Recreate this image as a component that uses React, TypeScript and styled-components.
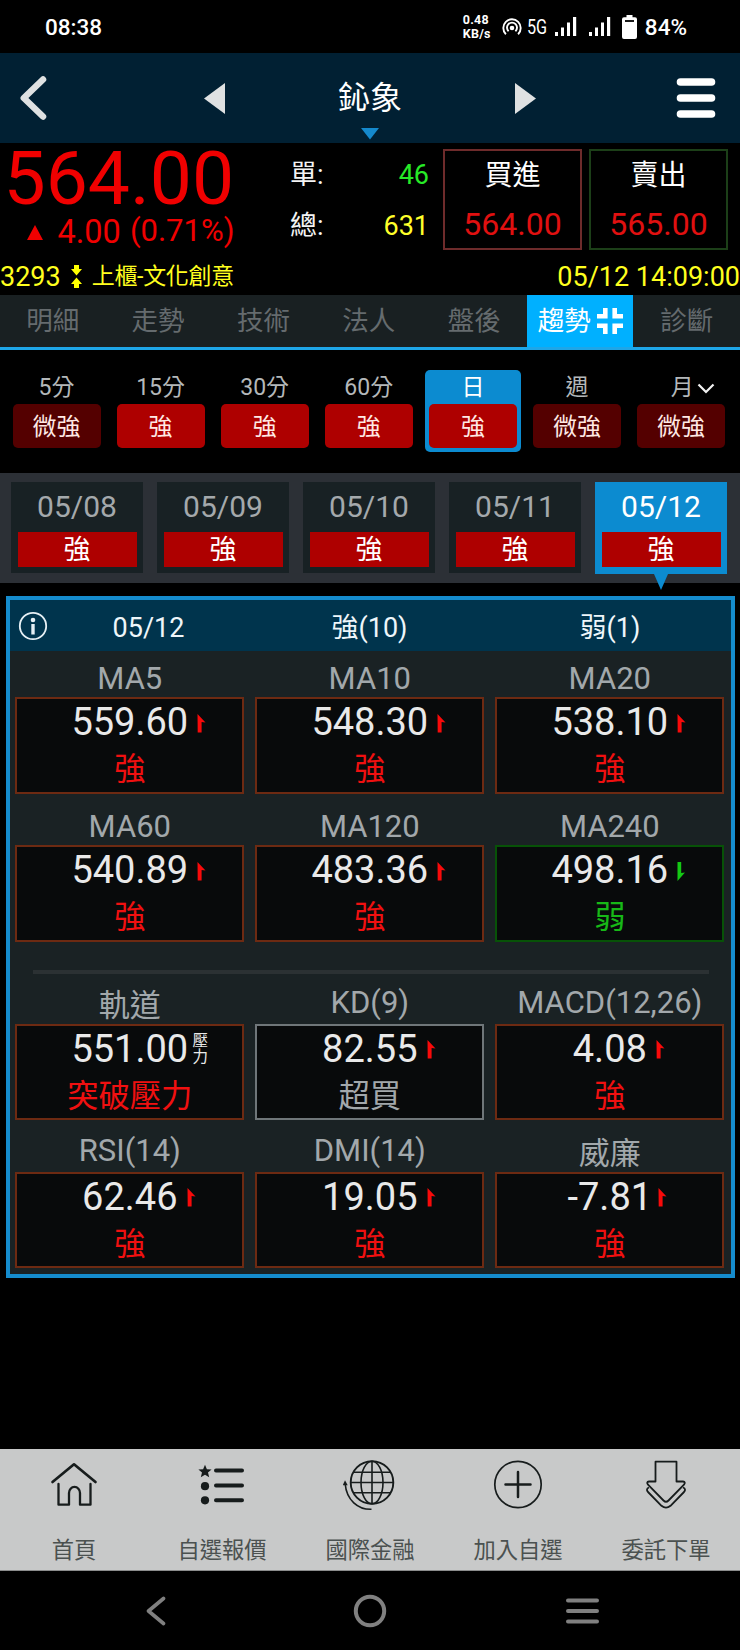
import React from "react";
import styled, { createGlobalStyle } from "styled-components";

const GlobalStyle = createGlobalStyle`
  * { box-sizing: border-box; }
  body {
    margin: 0;
    background: #000;
    font-family: Roboto, "Noto Sans CJK TC", sans-serif;
  }
  svg { display: block; flex: none; }
`;

const Screen = styled.main`
  width: 740px;
  height: 1650px;
  display: flex;
  flex-direction: column;
  background: #000;
  color: #fff;
  white-space: nowrap;
  overflow: hidden;
`;

/* ---------- status bar ---------- */

const StatusBar = styled.header`
  height: 53px;
  padding: 0 53px 0 45px;
  display: flex;
  align-items: center;
  font-size: 22.5px;
  font-weight: 500;
  line-height: 54px;
`;

const Clock = styled.span`
  margin-right: auto;
`;

const NetSpeed = styled.span`
  width: 28px;
  margin-right: 11px;
  font-size: 12.5px;
  font-weight: 700;
  line-height: 13.5px;
  letter-spacing: 0.2px;
`;

const NetworkType = styled.span`
  width: 20px;
  margin: 0 8px 0 5.5px;
  font-size: 20px;
  font-weight: 400;
  transform: scaleX(0.81);
  transform-origin: left;
`;

/* ---------- title bar ---------- */

const TitleBar = styled.nav`
  height: 90px;
  padding: 0 24px 0 19px;
  display: grid;
  grid-template-columns: 185px 21px 1fr 21px 180px;
  align-items: center;
  background: #012033;
`;

const TitleBlock = styled.div`
  height: 90px;
  padding-top: 23px;
  display: flex;
  flex-direction: column;
  align-items: center;
  font-size: 32px;
  line-height: 44px;
  svg { margin-top: 8px; }
`;

const MenuButton = styled.div`
  justify-self: end;
`;

/* ---------- quote ---------- */

const Quote = styled.section`
  height: 115px;
  display: flex;
`;

const PriceBlock = styled.div`
  width: 290px;
  padding-left: 3.5px;
  color: #f00000;
`;

const Price = styled.div`
  margin-bottom: 3px;
  font-size: 75px;
  line-height: 71px;
`;

const Change = styled.div`
  display: flex;
  align-items: center;
  padding-left: 23px;
  height: 31px;
  font-size: 32.5px;
  line-height: 31px;
  svg { margin-right: 15px; }
`;

const Percent = styled.span`
  font-size: 31px;
  margin: -5px 0 0 9px;
`;

const Volumes = styled.dl`
  width: 139px;
  margin: 7px 14px 0 0;
  font-size: 27px;
`;

const VolumeRow = styled.div<{ $color: string }>`
  display: flex;
  justify-content: space-between;
  line-height: 50.7px;
  dt { color: #f4f4f4; }
  dd { margin: 0; color: ${(p) => p.$color}; }
`;

const OrderBox = styled.div<{ $border: string }>`
  width: 139px;
  height: 101px;
  margin: 6px 7px 0 0;
  border: 2px solid ${(p) => p.$border};
  font-size: 28px;
  line-height: 49px;
  text-align: center;
`;

const OrderPrice = styled.div`
  color: #e01010;
  font-size: 32px;
`;

const Ticker = styled.div`
  height: 37px;
  display: flex;
  align-items: center;
  color: #ffff1e;
  font-size: 27px;
  line-height: 36px;
  svg { margin: 0 10px; }
`;

const Sector = styled.span`
  font-size: 23px;
  letter-spacing: -0.3px;
`;

const Timestamp = styled.span`
  margin-left: auto;
`;

/* ---------- tabs ---------- */

const Tabs = styled.nav`
  height: 55px;
  display: grid;
  grid-template-columns: repeat(5, 105.4px) 106.5px 1fr;
  background: #192022;
  border-bottom: 3px solid #1ea6e8;
`;

const Tab = styled.div<{ $active?: boolean }>`
  display: flex;
  justify-content: center;
  align-items: center;
  gap: 6px;
  font-size: 26.5px;
  line-height: 50px;
  color: ${(p) => (p.$active ? "#fff" : "#656b6e")};
  background: ${(p) => (p.$active ? "#00b0ff" : "transparent")};
`;

/* ---------- periods ---------- */

const Periods = styled.section`
  height: 123px;
  padding: 20px 8px 0 8.5px;
  display: flex;
  gap: 8.1px;
`;

const Period = styled.div<{ $active?: boolean }>`
  width: 96px;
  height: 82px;
  padding: 0 4px;
  border-radius: 5px;
  background: ${(p) => (p.$active ? "#0c8bd0" : "transparent")};
  color: ${(p) => (p.$active ? "#fff" : "#b4b8ba")};
`;

const PeriodName = styled.div<{ $shift?: boolean }>`
  height: 34px;
  padding: 2px 0 0 ${(p) => (p.$shift ? 24 : 0)}px;
  display: flex;
  align-items: center;
  justify-content: center;
  gap: 3.5px;
  font-size: 23px;
  line-height: 36px;
`;

const StrengthChip = styled.div<{ $weak?: boolean }>`
  height: 44px;
  border-radius: 5px;
  background: ${(p) => (p.$weak ? "#540000" : "#ae0000")};
  color: #ffe9e4;
  font-size: 24px;
  line-height: 47px;
  text-align: center;
`;

/* ---------- dates ---------- */

const Dates = styled.section`
  height: 110px;
  padding: 9px 0 0 11px;
  display: flex;
  gap: 14px;
  background: #2c3036;
`;

const DateCard = styled.div<{ $active?: boolean }>`
  position: relative;
  width: 132px;
  height: ${(p) => (p.$active ? 92 : 91)}px;
  padding: 0 6.5px;
  background: ${(p) => (p.$active ? "#0c8bd0" : "#182124")};
  color: ${(p) => (p.$active ? "#fff" : "#a4a9ac")};
  font-size: 30px;
  line-height: 49.5px;
  text-align: center;
`;

const DateStrength = styled.div`
  height: 35.5px;
  background: #ae0000;
  color: #fff;
  font-size: 27px;
  line-height: 36px;
`;

const Pointer = styled.svg`
  position: absolute;
  top: 92px;
  left: 59px;
`;

/* ---------- indicator panel ---------- */

const Panel = styled.section`
  width: 729px;
  height: 682px;
  margin: 13px 0 171px 5.5px;
  border: 4px solid #158ccd;
  background: #1a2224;
`;

const PanelHead = styled.div`
  height: 51px;
  padding-top: 5px;
  display: grid;
  grid-template-columns: 240px 240px 1fr;
  background: #00344d;
  color: #eef6fa;
  font-size: 27px;
  line-height: 46px;
  text-align: center;
`;

const PanelDate = styled.div`
  display: flex;
  svg { margin: 6px 0 0 8px; }
  span { flex: 1; }
`;

const Grid = styled.div<{ $labelHeight: number; $gap: number }>`
  display: grid;
  grid-template-columns: repeat(3, 229px);
  grid-auto-rows: ${(p) => p.$labelHeight + 96.5}px;
  column-gap: 11px;
  row-gap: ${(p) => p.$gap}px;
  padding-left: 5.8px;
`;

const Cell = styled.div`
  display: flex;
  flex-direction: column;
  justify-content: space-between;
`;

const Label = styled.div<{ $drop?: boolean }>`
  height: 36px;
  padding-top: ${(p) => (p.$drop ? 3 : 0)}px;
  color: #a2a8ab;
  font-size: 31px;
  line-height: 36px;
  text-align: center;
`;

const MovingAverages = styled.div`
  padding-top: 10px;
`;

const tones = {
  strong: { border: "#6d2a12", text: "#f01010" },
  weak: { border: "#075207", text: "#17b817" },
  neutral: { border: "#6f7679", text: "#a2a8ab" },
};

const Card = styled.div<{ $tone: keyof typeof tones }>`
  height: 96.5px;
  border: 2px solid ${(p) => tones[p.$tone].border};
  background: #080a0b;
  color: ${(p) => tones[p.$tone].text};
  font-size: 31.3px;
  line-height: 50px;
  text-align: center;
`;

const ValueRow = styled.div`
  display: grid;
  grid-template-columns: 1fr auto 1fr;
  height: 46px;
  color: #e9e9e9;
  font-size: 38px;
  line-height: 47px;
`;

const Mark = styled.div<{ $near?: boolean }>`
  grid-column: 3;
  padding: 14.5px 0 0 ${(p) => (p.$near ? 6 : 9)}px;
`;

const Value = styled.span`
  grid-column: 2;
`;

const SideNote = styled.div`
  grid-column: 3;
  width: 16px;
  margin: 7px 0 0 4px;
  font-size: 15.5px;
  line-height: 16px;
  white-space: normal;
`;

const Divider = styled.hr`
  width: 676px;
  height: 4px;
  margin: 28px 0 11px 23px;
  border: 0;
  background: #2b3133;
`;

/* ---------- bottom navigation ---------- */

const AppNav = styled.nav`
  height: 122px;
  display: grid;
  grid-template-columns: repeat(5, 1fr);
  background: #c8c9c9;
  border-bottom: 1px solid #8b8c8c;
`;

const AppNavItem = styled.div`
  padding-top: 8px;
  display: flex;
  flex-direction: column;
  align-items: center;
  color: #4b5150;
  font-size: 22.3px;
  line-height: 30px;
  svg { margin-bottom: 24px; }
`;

const SystemNav = styled.nav`
  height: 79px;
  display: grid;
  grid-template-columns: 1fr 34px 1fr;
  align-items: center;
  padding: 0 141px 0 146px;
  column-gap: 0;
`;

const RecentApps = styled.svg`
  justify-self: end;
`;

const HomeCircle = styled.svg`
  margin-left: -2.5px;
`;

/* ---------- drawings ---------- */

const Hotspot = () => (
  <svg width="20" height="20" viewBox="0 0 20 20" fill="none" stroke="#fff" strokeWidth="1.9">
    <path d="M3.9 17.2A8.7 8.7 0 1 1 16.1 17.2" />
    <path d="M6.6 14.3A5 5 0 1 1 13.4 14.3" />
    <circle cx="10" cy="11" r="2.3" fill="#fff" stroke="none" />
  </svg>
);

const SignalBars = styled.svg`
  margin-right: 12px;
`;

const Signal = () => (
  <SignalBars width="22" height="20" fill="#fff">
    <rect x="0" y="15" width="3" height="4" />
    <rect x="6" y="10.5" width="3" height="8.5" />
    <rect x="12" y="5.5" width="3" height="13.5" />
    <rect x="18" y="0" width="3.2" height="19" />
  </SignalBars>
);

const BatteryShape = styled.svg`
  margin: 0 7.5px 0 -1px;
`;

const Battery = () => (
  <BatteryShape width="15" height="24" viewBox="0 0 15 24">
    <path fill="#fff" d="M4.5 0h6v2.2H13a2 2 0 0 1 2 2V22a2 2 0 0 1-2 2H2a2 2 0 0 1-2-2V4.200a2 2 0 0 1 2-2h2.500z" />
    <path stroke="#000" strokeWidth="1.8" d="M3 6h9" />
  </BatteryShape>
);

const UpMark = () => (
  <svg width="9" height="19" viewBox="0 0 9 19">
    <path fill="#f80a0a" d="M.5 0 8.500 8.500 4.600 8V18.500H.7z" />
  </svg>
);

const DownMark = () => (
  <svg width="9" height="19" viewBox="0 0 9 19">
    <path fill="#14c814" d="M.5 19 8 10.500 4.200 11V0H.5z" />
  </svg>
);

const ink = "#171c1c";

const HomeIcon = () => (
  <svg width="50" height="54" viewBox="0 0 50 54" fill="none" stroke={ink} strokeLinecap="round" strokeLinejoin="round">
    <path strokeWidth="2.7" d="M3.500 25 25 7.300 46.500 25" />
    <path strokeWidth="2.300" d="M9.500 27V47.700H20V36a5 5.500 0 0 1 11 0V47.700H41.500V27" />
  </svg>
);

const ListIcon = () => (
  <svg width="50" height="54" viewBox="0 0 50 54" fill={ink}>
    <path d="M8 7.700 9.900 12.300l4.700.3-3.600 3 1.200 4.700L8 17.700l-4.200 2.600L5 15.600l-3.600-3 4.700-.3z" />
    <circle cx="8" cy="29.200" r="4.100" />
    <circle cx="8" cy="43.300" r="4.100" />
    <path stroke={ink} strokeWidth="4" strokeLinecap="round" d="M19 13.500H45M19 28.400H45M19 43.300H45" />
  </svg>
);

const GlobeIcon = () => (
  <svg width="54" height="54" viewBox="0 0 54 54" fill="none" stroke={ink} strokeWidth="1.600">
    <circle cx="29" cy="25.500" r="21.300" strokeWidth="1.900" />
    <ellipse cx="29" cy="25.500" rx="11" ry="21.300" />
    <path d="M29 4.200V46.800M7.700 25.500H50.300M11 15.300H47M11 35.700H47" />
    <path d="M2.200 27C3.500 43 15 52.700 28.500 52.300" />
    <path fill={ink} stroke="none" d="M2 23.300 4.700 28.300H-.3z" />
  </svg>
);

const AddIcon = () => (
  <svg width="50" height="54" viewBox="0 0 50 54" fill="none" stroke={ink}>
    <circle cx="25" cy="27.500" r="23.200" strokeWidth="1.700" />
    <path strokeWidth="2.500" strokeLinecap="round" d="M12.500 27.500H37.500M25 15V40" />
  </svg>
);

const OrderIcon = () => (
  <svg width="50" height="54" viewBox="0 0 50 54" fill="none" stroke={ink} strokeWidth="1.800" strokeLinejoin="round">
    <path d="M14.500 4.700H35.500V24.500H42Q45 25 43 27.700L27.500 43.500Q25 46 22.500 43.500L7 27.700Q5 25 8 24.500H14.500z" />
    <path d="M8 30.500Q4.500 32 7 35L20.500 48.800Q25 52.500 29.500 48.800L43 35Q45.500 32 42 30.500" />
  </svg>
);

/* ---------- data ---------- */

type Indicator = {
  name: string;
  value: string;
  status: string;
  tone?: keyof typeof tones;
  mark?: "up" | "down" | "note";
  drop?: boolean;
};

const movingAverages: Indicator[] = [
  { name: "MA5", value: "559.60", status: "強" },
  { name: "MA10", value: "548.30", status: "強" },
  { name: "MA20", value: "538.10", status: "強" },
  { name: "MA60", value: "540.89", status: "強" },
  { name: "MA120", value: "483.36", status: "強" },
  { name: "MA240", value: "498.16", status: "弱", tone: "weak", mark: "down" },
];

const oscillators: Indicator[] = [
  { name: "軌道", value: "551.00", status: "突破壓力", mark: "note", drop: true },
  { name: "KD(9)", value: "82.55", status: "超買", tone: "neutral" },
  { name: "MACD(12,26)", value: "4.08", status: "強" },
  { name: "RSI(14)", value: "62.46", status: "強" },
  { name: "DMI(14)", value: "19.05", status: "強" },
  { name: "威廉", value: "-7.81", status: "強", drop: true },
];

const periods = [
  ["5分", "微強"],
  ["15分", "強"],
  ["30分", "強"],
  ["60分", "強"],
  ["日", "強"],
  ["週", "微強"],
  ["月", "微強"],
];

const IndicatorCell = ({ item }: { item: Indicator }) => (
  <Cell>
    <Label $drop={item.drop}>{item.name}</Label>
    <Card $tone={item.tone ?? "strong"}>
      <ValueRow>
        <Value>{item.value}</Value>
        {item.mark === "note" ? (
          <SideNote>壓力</SideNote>
        ) : (
          <Mark $near={item.value.startsWith("-")}>{item.mark === "down" ? <DownMark /> : <UpMark />}</Mark>
        )}
      </ValueRow>
      {item.status}
    </Card>
  </Cell>
);

export default function App() {
  return (
    <Screen>
      <GlobalStyle />
      <StatusBar>
        <Clock>08:38</Clock>
        <NetSpeed>
          0.48
          <br />
          KB/s
        </NetSpeed>
        <Hotspot />
        <NetworkType>5G</NetworkType>
        <Signal />
        <Signal />
        <Battery />
        <span>84%</span>
      </StatusBar>

      <TitleBar>
        <svg width="28" height="46" viewBox="0 0 28 46" fill="none" stroke="#dfe1e2" strokeWidth="6.500" strokeLinecap="round" strokeLinejoin="round">
          <path d="M24 4.500 4.800 23 24 41.500" />
        </svg>
        <svg width="21" height="31">
          <path fill="#dfe1e2" d="M21 0V31L0 15.500z" />
        </svg>
        <TitleBlock>
          鈊象
          <svg width="18" height="12">
            <path fill="#1589cc" d="M0 0H18L9 11.500z" />
          </svg>
        </TitleBlock>
        <svg width="21" height="31">
          <path fill="#dfe1e2" d="M0 0V31L21 15.500z" />
        </svg>
        <MenuButton>
          <svg width="40" height="42" stroke="#fff" strokeWidth="7.600" strokeLinecap="round">
            <path d="M4.500 5H35.500M4.500 21H35.500M4.500 37H35.500" />
          </svg>
        </MenuButton>
      </TitleBar>

      <Quote>
        <PriceBlock>
          <Price>564.00</Price>
          <Change>
            <svg width="16" height="15">
              <path fill="#f00000" d="M8 0 16 15H0z" />
            </svg>
            4.00
            <Percent>(0.71%)</Percent>
          </Change>
        </PriceBlock>
        <Volumes>
          <VolumeRow $color="#27ea27">
            <dt>單:</dt>
            <dd>46</dd>
          </VolumeRow>
          <VolumeRow $color="#ffff2a">
            <dt>總:</dt>
            <dd>631</dd>
          </VolumeRow>
        </Volumes>
        <OrderBox $border="#6e2b2b">
          買進
          <OrderPrice>564.00</OrderPrice>
        </OrderBox>
        <OrderBox $border="#1c3f18">
          賣出
          <OrderPrice>565.00</OrderPrice>
        </OrderBox>
      </Quote>
      <Ticker>
        3293
        <svg width="11" height="23" viewBox="0 0 11 23">
          <path fill="#ffff00" d="M3 0H8V4H11L5.500 10.500 0 4H3zM3 23H8V19H11L5.500 12.500 0 19H3z" />
        </svg>
        <Sector>上櫃-文化創意</Sector>
        <Timestamp>05/12 14:09:00</Timestamp>
      </Ticker>

      <Tabs>
        {["明細", "走勢", "技術", "法人", "盤後"].map((name) => (
          <Tab key={name}>{name}</Tab>
        ))}
        <Tab $active>
          趨勢
          <svg width="26" height="26" fill="none" stroke="#fff" strokeWidth="4.600">
            <path d="M0 8.300H8.300V0M17.700 0V8.300H26M0 17.700H8.300V26M26 17.700H17.700V26" />
          </svg>
        </Tab>
        <Tab>診斷</Tab>
      </Tabs>

      <Periods>
        {periods.map(([name, strength]) => (
          <Period key={name} $active={name === "日"}>
            <PeriodName $shift={name === "月"}>
              {name}
              {name === "月" && (
                <svg width="18" height="11" fill="none" stroke="#f2f2f2" strokeWidth="2.200">
                  <path d="M1.500 1.500 9 9 16.500 1.500" />
                </svg>
              )}
            </PeriodName>
            <StrengthChip $weak={strength === "微強"}>{strength}</StrengthChip>
          </Period>
        ))}
      </Periods>

      <Dates>
        {["05/08", "05/09", "05/10", "05/11", "05/12"].map((date) => (
          <DateCard key={date} $active={date === "05/12"}>
            {date}
            <DateStrength>強</DateStrength>
            {date === "05/12" && (
              <Pointer width="14" height="16">
                <path fill="#0c8bd0" d="M0 0H14L7 16z" />
              </Pointer>
            )}
          </DateCard>
        ))}
      </Dates>

      <Panel>
        <PanelHead>
          <PanelDate>
            <svg width="30" height="30" fill="none" stroke="#e6f0f5" strokeWidth="1.800">
              <circle cx="15" cy="15" r="13.200" />
              <circle cx="15" cy="9" r="2.300" fill="#e6f0f5" stroke="none" />
              <path strokeWidth="3.400" d="M15 13V23.500" />
            </svg>
            <span>05/12</span>
          </PanelDate>
          <div>強(10)</div>
          <div>弱(1)</div>
        </PanelHead>
        <MovingAverages>
          <Grid $labelHeight={36} $gap={15.5}>
            {movingAverages.map((item) => (
              <IndicatorCell key={item.name} item={item} />
            ))}
          </Grid>
        </MovingAverages>
        <Divider />
        <Grid $labelHeight={39} $gap={12.5}>
          {oscillators.map((item) => (
            <IndicatorCell key={item.name} item={item} />
          ))}
        </Grid>
      </Panel>

      <AppNav>
        <AppNavItem>
          <HomeIcon />
          首頁
        </AppNavItem>
        <AppNavItem>
          <ListIcon />
          自選報價
        </AppNavItem>
        <AppNavItem>
          <GlobeIcon />
          國際金融
        </AppNavItem>
        <AppNavItem>
          <AddIcon />
          加入自選
        </AppNavItem>
        <AppNavItem>
          <OrderIcon />
          委託下單
        </AppNavItem>
      </AppNav>

      <SystemNav>
        <svg width="20" height="30" fill="none" stroke="#808080" strokeWidth="3.600" strokeLinecap="round" strokeLinejoin="round">
          <path d="M17.500 2.500 2.500 15 17.500 27.500" />
        </svg>
        <HomeCircle width="34" height="34" fill="none" stroke="#808080" strokeWidth="4">
          <circle cx="17" cy="17" r="14.200" />
        </HomeCircle>
        <RecentApps width="33" height="26" stroke="#808080" strokeWidth="4" strokeLinecap="round">
          <path d="M2 2.500H31M2 13H31M2 23.500H31" />
        </RecentApps>
      </SystemNav>
    </Screen>
  );
}
